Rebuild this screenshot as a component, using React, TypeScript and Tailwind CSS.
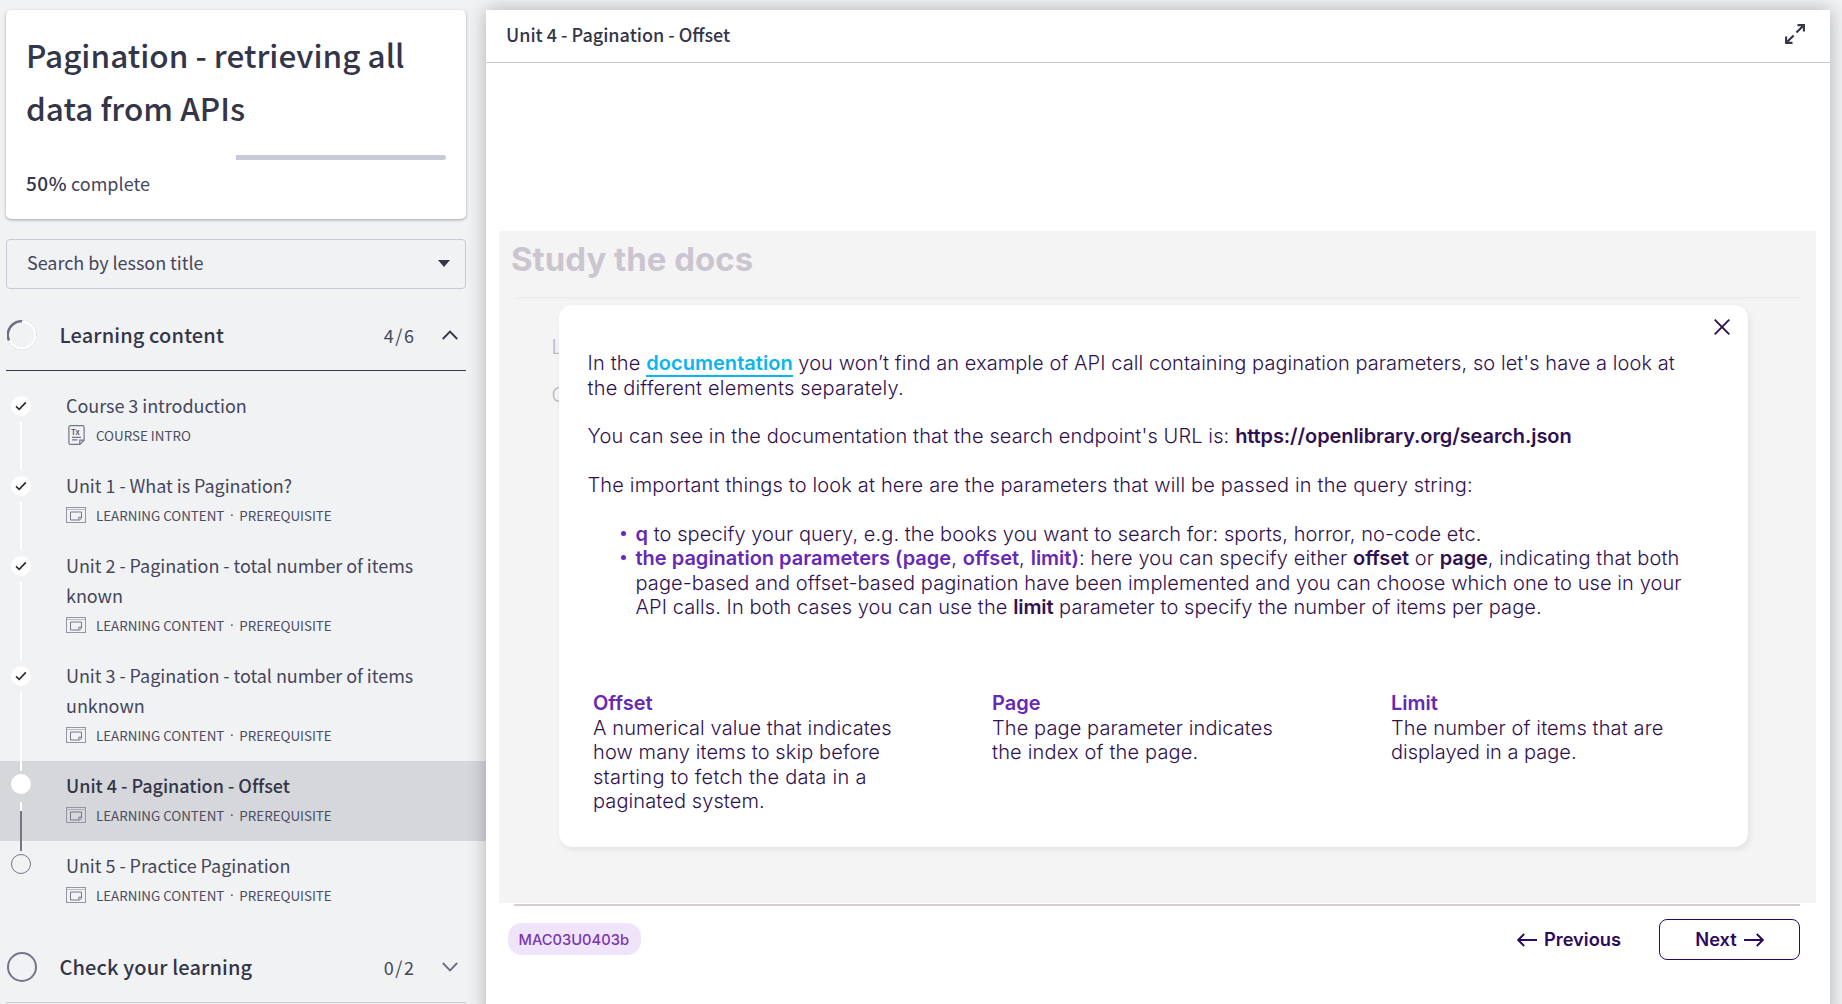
import type { ReactNode } from 'react';

function CheckIcon() {
  return (
    <svg width="12" height="10" viewBox="0 0 12 10" fill="none" stroke="#2a2a33" strokeWidth="1.6">
      <path d="M1 5.4 4.2 8.3 10.8 1.4" />
    </svg>
  );
}

function PageIcon() {
  return (
    <svg width="20" height="16" viewBox="0 0 20 16" fill="none" stroke="#9495a7" strokeWidth="1">
      <rect x="0.5" y="0.5" width="19" height="15" />
      <path d="M1 2.5h18" strokeOpacity="0.6" />
      <path d="M4.5 5h11v6.3l-1.9 1.7H4.5z M15.5 10.2h-2.7V13" stroke="#76778b" />
    </svg>
  );
}

function DocIcon() {
  return (
    <svg width="17" height="20" viewBox="0 0 17 20" fill="none" stroke="#73758a" strokeWidth="1.2">
      <path d="M2.5.6h12a1.6 1.6 0 0 1 1.6 1.6v13l-4.3 4.2H2.5a1.6 1.6 0 0 1-1.6-1.6V2.2A1.6 1.6 0 0 1 2.5.6z" />
      <path d="M16 15.2h-4.2v4.2M4 12.4h9M4 14.9h5.500" />
      <text x="3" y="9.8" fontSize="8" fontFamily="Noto Sans CJK SC" fontWeight="500" fill="#4b4d63" stroke="none">Tx</text>
    </svg>
  );
}

function Chevron({ up }: { up?: boolean }) {
  return (
    <svg width="16" height="10" viewBox="0 0 16 10" fill="none" stroke={up ? '#333549' : '#6c6e83'} strokeWidth="1.8">
      <path d={up ? 'M.8 9 8 1.6 15.2 9' : 'M.8 1 8 8.4 15.2 1'} />
    </svg>
  );
}

function SectionHeader({ title, count, open, ring }: { title: string; count: string; open?: boolean; ring: ReactNode }) {
  return (
    <div className={open ? 'mx-1.5 flex h-[71px] w-[460px] items-center border-b border-[#36384f]' : 'mx-1.5 flex h-[71px] w-[460px] items-center border-b border-[#c8cad6]'}>
      <div className="ml-px w-[30px]">{ring}</div>
      <h2 className="ml-[22.5px] text-[20px] font-medium leading-[30px] tracking-[0.14px]">{title}</h2>
      <span className="ml-auto text-[18px] tracking-[1.6px] text-[#45475b]">{count}</span>
      <span className="mr-2 ml-[26.5px]"><Chevron up={open} /></span>
    </div>
  );
}

type Status = 'done' | 'current' | 'todo';

function Lesson({ title, intro, status }: { title: string[]; intro?: boolean; status: Status }) {
  return (
    <div className={status === 'current' ? 'flex bg-[#d6d7db]' : 'flex'}>
      <div className={status === 'done' ? 'flex w-[42px] flex-col items-center pt-[15px]' : 'flex w-[42px] flex-col items-center pt-[13px]'}>
        {status === 'done' && (
          <>
            <span className="flex size-5 shrink-0 items-center justify-center rounded-full bg-white"><CheckIcon /></span>
            <span className="relative mt-[6px] -mb-[10px] w-0.5 flex-1 bg-white shadow-[0_0_1px_#00000022]" />
          </>
        )}
        {status === 'current' && (
          <>
            <span className="size-5 shrink-0 rounded-full bg-white" />
            <span className="mt-2 h-[9px] w-0.5 bg-white" />
            <span className="relative -mb-[10px] w-0.5 flex-1 bg-[#737589]" />
          </>
        )}
        {status === 'todo' && <span className="size-5 shrink-0 rounded-full border border-[#737589]" />}
      </div>
      <div className="ml-6 pt-[8.5px] pb-3">
        <div className={status === 'current' ? 'text-[18px] font-medium leading-[30px] tracking-[-0.02px]' : 'text-[18px] leading-[30px] tracking-[-0.05px] text-[#45475b]'}>
          {title.map((t) => <div key={t}>{t}</div>)}
        </div>
        <div className="mt-px flex h-[28.5px] items-center text-[13.4px] text-[#4b4d61]">
          <span className="flex w-[30px] items-center">{intro ? <span className="ml-0.5"><DocIcon /></span> : <PageIcon />}</span>
          {intro ? <span>COURSE INTRO</span> : (
            <span className="flex whitespace-nowrap tracking-[-0.02px]"><span>LEARNING CONTENT</span><span className="w-[15px] text-center font-['Noto_Sans']">·</span><span>PREREQUISITE</span></span>
          )}
        </div>
      </div>
    </div>
  );
}

const lessons: { title: string[]; intro?: boolean; status: Status }[] = [
  { title: ['Course 3 introduction'], intro: true, status: 'done' },
  { title: ['Unit 1 - What is Pagination?'], status: 'done' },
  { title: ['Unit 2 - Pagination - total number of items', 'known'], status: 'done' },
  { title: ['Unit 3 - Pagination - total number of items', 'unknown'], status: 'done' },
  { title: ['Unit 4 - Pagination - Offset'], status: 'current' },
  { title: ['Unit 5 - Practice Pagination'], status: 'todo' },
];

function Sidebar() {
  return (
    <aside className="flex h-[1004px] w-[486px] shrink-0 flex-col overflow-hidden">
      <div className="mt-2.5 ml-1.5 h-[209px] w-[460px] shrink-0 rounded-[5px] bg-white px-5 pt-[18px] shadow-[0_1px_3px_#00000055]">
        <h1 className="text-[31.5px] font-medium leading-[53px] tracking-[0.02px]">
          Pagination - retrieving all<br />data from APIs
        </h1>
        <div className="mt-[21px] flex h-[5px] overflow-hidden rounded-full">
          <div className="w-1/2 bg-white" />
          <div className="w-1/2 bg-[#c8cad6]" />
        </div>
        <p className="mt-[9px] text-[18px] leading-7 text-[#45475b]"><b className="text-[19px] font-medium tracking-[0.5px] text-[#333549]">50%</b> complete</p>
      </div>
      <div className="mt-5 ml-1.5 flex h-[50px] w-[460px] shrink-0 items-center justify-between rounded-[4px] border border-[#c8cad6] pr-[15px] pl-5">
        <span className="mb-[3px] text-[18px] tracking-[-0.04px] text-[#45475b]">Search by lesson title</span>
        <svg className="mb-0.5" width="12" height="7" viewBox="0 0 12 7"><path d="M0 0h12L6 7z" fill="#333549" /></svg>
      </div>
      <div className="h-[11px] shrink-0" />
      <SectionHeader
        title="Learning content"
        count="4/6"
        open
        ring={
          <svg width="30" height="30" viewBox="0 0 30 30" fill="none">
            <circle cx="15" cy="15" r="14.5" stroke="#b4b6c2" strokeWidth="0.9" strokeDasharray="2 2" />
            <circle cx="15" cy="15" r="13.4" stroke="#fff" strokeWidth="2.2" />
            <path d="M15 1.2A13.8 13.8 0 0 0 2 20.5" stroke="#6c6e83" strokeWidth="2.4" />
          </svg>
        }
      />
      <div className="h-2.5 shrink-0" />
      {lessons.map((l) => <Lesson key={l.title.join()} {...l} />)}
      <div className="h-[11px] shrink-0" />
      <SectionHeader title="Check your learning" count="0/2" ring={<div className="size-[30px] rounded-full border-2 border-[#737589]" />} />
    </aside>
  );
}

function P({ children }: { children: ReactNode }) {
  return <b className="font-semibold tracking-normal text-[#6629b5]">{children}</b>;
}
function B({ children }: { children: ReactNode }) {
  return <b className="font-semibold tracking-[-0.1px]">{children}</b>;
}
function Arrow({ left }: { left?: boolean }) {
  return (
    <svg width="20" height="14" viewBox="0 0 20 14" fill="none" stroke="#2e0a5e" strokeWidth="1.9" className={left ? 'rotate-180' : ''}>
      <path d="M0 7h19M12.8 1l6 6-6 6" />
    </svg>
  );
}

function Popup() {
  return (
    <section className="relative ml-[60px] h-[542px] w-[1189px] rounded-[14px] bg-white pt-[46px] pl-[28.5px] font-[Inter] text-[20px] font-light leading-[24.4px] tracking-[0.08px] whitespace-nowrap text-[#2f1150] shadow-[2px_3px_6px_#00000012]">
      <svg className="absolute top-[14px] right-[18px]" width="16" height="16" viewBox="0 0 16 16" stroke="#2f1150" strokeWidth="1.9"><path d="M.7.7 15.3 15.3M15.3.7.7 15.3" /></svg>
      <p className="tracking-[0.07px]"><span className="tracking-[0.17px]">In the </span><a className="border-b-2 border-[#0bb4f0] font-semibold tracking-[0.03px] text-[#0bb4f0]">documentation</a> you won’t find an example of API call containing pagination parameters, so let's have a look at</p>
      <p className="relative top-px tracking-[0.2px]">the different elements separately.</p>
      <p className="mt-[24.4px] tracking-[0.12px]">You can see in the documentation that the search endpoint's URL is: <B>https://openlibrary.org/search.json</B></p>
      <p className="mt-[24.4px] tracking-[0.16px]">The important things to look at here are the parameters that will be passed in the query string:</p>
      <ul className="mt-[24.4px] pl-[48px]">
        <li className="relative"><span className="absolute -left-[15px] top-[9px] size-[5px] rounded-full bg-[#6629b5]" /><P>q</P> to specify your query, e.g. the books you want to search for: sports, horror, no-code etc.</li>
        <li className="relative">
          <span className="absolute -left-[15px] top-[9px] size-[5px] rounded-full bg-[#6629b5]" />
          <span className="tracking-[0.13px]"><P>the pagination parameters (page</P>, <P>offset</P>, <P>limit)</P>: here you can specify either <B>offset</B> or <B>page</B>, indicating that both</span><br />
          page-based and offset-based pagination have been implemented and you can choose which one to use in your<br />
          API calls. In both cases you can use the <B>limit</B> parameter to specify the number of items per page.
        </li>
      </ul>
      <div className="mt-[72px] grid grid-cols-[399px_399px_1fr] pl-[5.5px] tracking-[0.1px]">
        <div>
          <h3><P>Offset</P></h3>
          <p>A numerical value that indicates<br />how many items to skip before</p>
          <p className="tracking-[0.3px]">starting to fetch the data in a</p>
          <p>paginated system.</p>
        </div>
        <div>
          <h3><P>Page</P></h3>
          <p>The page parameter indicates</p>
          <p className="tracking-[0.17px]">the index of the page.</p>
        </div>
        <div>
          <h3><P>Limit</P></h3>
          <p className="tracking-[0.13px]">The number of items that are</p>
          <p className="tracking-normal">displayed in a page.</p>
        </div>
      </div>
    </section>
  );
}

export default function App() {
  return (
    <div className="flex h-[1004px] w-[1842px] overflow-hidden bg-[#f1f2f4] font-['Noto_Sans_CJK_SC',sans-serif] text-[#333549]">
      <Sidebar />
      <main className="mt-2.5 flex h-[1010px] w-[1344px] shrink-0 flex-col bg-white shadow-[0_0_18px_#00000045]">
        <header className="flex h-[53px] shrink-0 items-center justify-between border-b border-[#c8cad2] pr-[25px] pb-[4px] pl-5">
          <h2 className="text-[18px] font-medium leading-[30px]">Unit 4 - Pagination - Offset</h2>
          <svg width="20" height="20" viewBox="0 0 20 20" fill="none" stroke="#333549" strokeWidth="2.1">
            <path d="M11.400 8.600 18.500 1.500M12.500 1.100h6.400v6.400M8.600 11.400 1.500 18.500M1.100 12.500v6.400h6.400" />
          </svg>
        </header>
        <div className="h-[168px] shrink-0" />
        <div className="mx-[13px] h-[672px] w-[1317px] shrink-0 overflow-hidden bg-[#f4f4f4]">
          <h1 className="pt-[8px] pl-[12px] font-[Inter] text-[33px] leading-[40px] font-bold text-[#cbc5d0]">Study the docs</h1>
          <div className="mt-[18px] ml-[15.5px] h-0.5 w-[1285px] bg-[#ededed]" />
          <div className="relative mt-[6px]">
            <div className="absolute top-[27px] left-[52.5px] font-[Inter] text-[20px] leading-[30px] font-light text-[#bcb6c4]"><div className="h-[48px]">L</div><div>O</div></div>
            <Popup />
          </div>
        </div>
        <footer className="pr-[30px] pl-[28px]">
          <div className="mt-px h-[1.5px] bg-[#d6cdcd]" />
          <div className="mt-[13.5px] flex h-[41px] items-center font-[Inter]">
            <span className="mb-0.5 -ml-[6px] flex h-8 w-[133px] items-center rounded-[14px] bg-[#f0e4fb] pt-[3px] pl-[10.5px] text-[14.7px] font-medium text-[#7a35b0]">MAC03U0403b</span>
            <button className="ml-auto flex items-center gap-[7px] text-[18.3px] font-semibold text-[#2e0a5e]"><Arrow left />Previous</button>
            <button className="ml-[38px] flex h-[41px] w-[141px] items-center justify-center gap-[7px] rounded-[8px] border-[1.5px] border-[#2e0a5e] text-[18.3px] font-semibold text-[#2e0a5e]">Next<Arrow /></button>
          </div>
        </footer>
      </main>
    </div>
  );
}
